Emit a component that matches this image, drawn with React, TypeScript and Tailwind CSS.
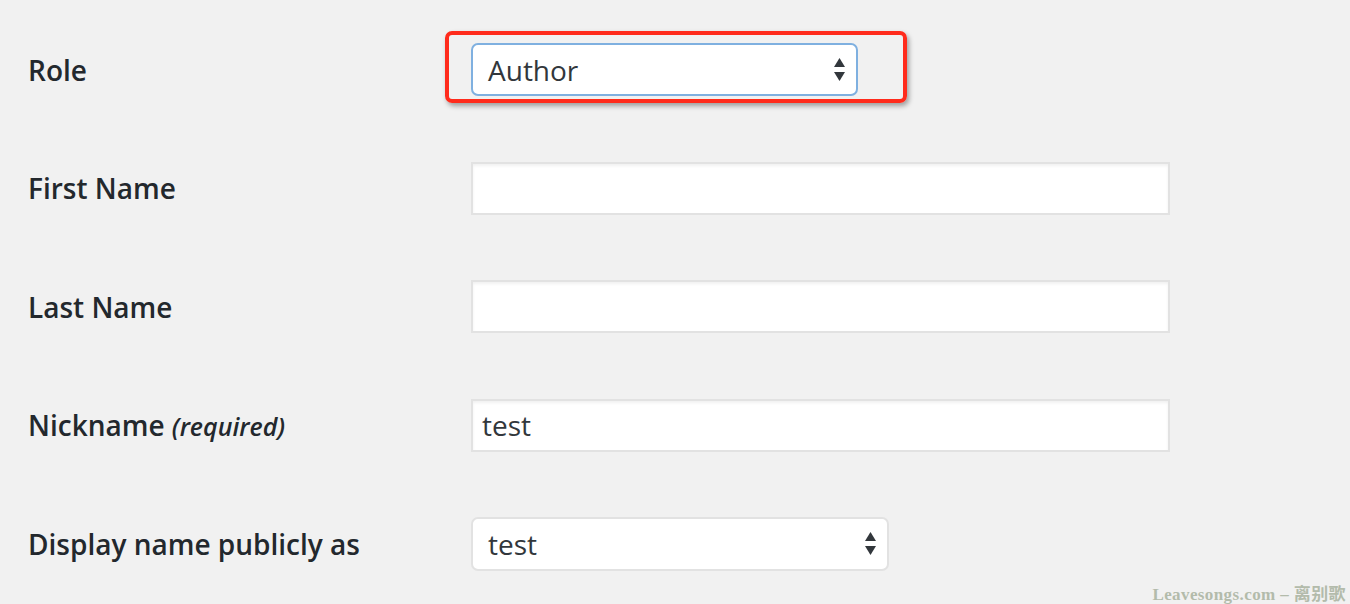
import React from 'react';

function Arrows() {
  return (
    <svg width="13" height="28" viewBox="0 0 13 28" className="text-[#32373c]">
      <path d="M6.5 2 L12 11 L1 11 Z" fill="currentColor" />
      <path d="M1 16 L12 16 L6.5 25 Z" fill="currentColor" />
    </svg>
  );
}

function Label({ children }: { children: React.ReactNode }) {
  return (
    <div className="w-[471px] shrink-0 pl-[28px] text-[28px] font-semibold text-[#23282d]">
      {children}
    </div>
  );
}

function TextInput({ value = '' }: { value?: string }) {
  return (
    <div className="w-[699px] h-[53px] bg-white border-2 border-[#e2e2e2] shadow-[inset_0_2px_3px_rgba(0,0,0,0.06)] flex items-center pl-[9px] text-[28px] text-[#32373c]">
      {value}
    </div>
  );
}

export default function App() {
  return (
    <div
      className="relative w-[1350px] h-[604px] bg-[#f1f1f1] overflow-hidden"
      style={{ fontFamily: '"Open Sans", "Noto Sans", sans-serif' }}
    >
      <div className="flex flex-col gap-[65.5px] pt-[43px]">
        {/* Role */}
        <div className="flex items-center h-[53px]">
          <Label>Role</Label>
          <div className="relative">
            <div className="w-[387px] h-[53px] bg-white border-2 border-[#7fb0e0] rounded-[7px] flex items-center justify-between pl-[15px] pr-[10px] text-[28px] text-[#32373c]">
              <span>Author</span>
              <Arrows />
            </div>
            {/* red highlight */}
            <div className="absolute left-[-26px] top-[-12px] w-[462px] h-[72px] border-[4px] border-[#ff2b1c] rounded-[7px] shadow-[2px_3px_5px_rgba(0,0,0,0.35)] pointer-events-none" />
          </div>
        </div>

        <div className="flex items-center h-[53px]">
          <Label>First Name</Label>
          <TextInput />
        </div>

        <div className="flex items-center h-[53px]">
          <Label>Last Name</Label>
          <TextInput />
        </div>

        <div className="flex items-center h-[53px]">
          <Label>
            Nickname <span className="italic text-[25px] font-semibold">(required)</span>
          </Label>
          <TextInput value="test" />
        </div>

        <div className="flex items-center h-[54px]">
          <Label>Display name publicly as</Label>
          <div className="w-[418px] h-[54px] bg-white border-2 border-[#e2e2e2] rounded-[7px] flex items-center justify-between pl-[15px] pr-[10px] text-[28px] text-[#32373c]">
            <span>test</span>
            <Arrows />
          </div>
        </div>
      </div>

      {/* watermark */}
      <div
        className="absolute right-[4px] bottom-[-3px] text-[17px] font-bold text-[#b3bbab] tracking-[0.4px]"
        style={{ fontFamily: '"Liberation Serif", "Noto Sans CJK SC", serif' }}
      >
        Leavesongs.com – 离别歌
      </div>
    </div>
  );
}
